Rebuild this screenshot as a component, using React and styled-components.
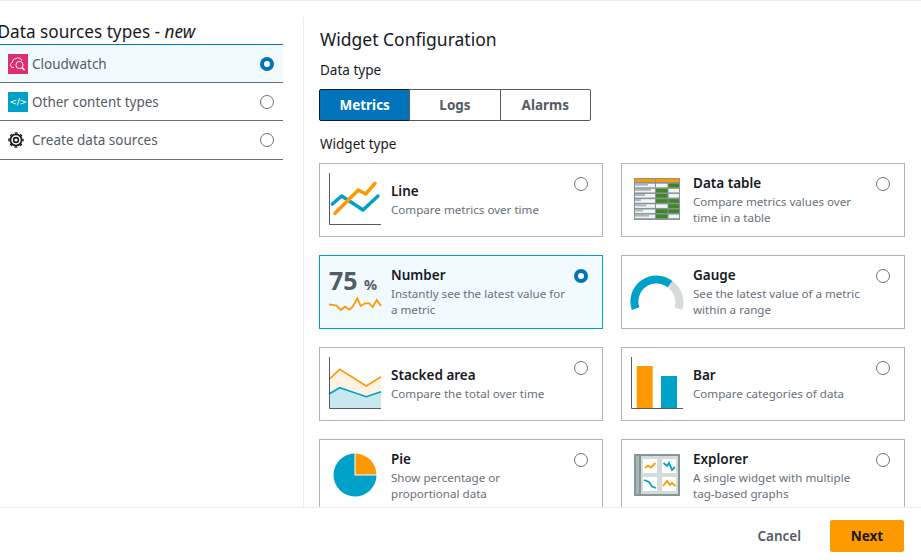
import styled, { createGlobalStyle } from 'styled-components';

const GlobalStyle = createGlobalStyle`
    html, body {
        margin: 0;
        padding: 0;
        background: #fff;
    }

    body {
        font-family: "Noto Sans", "Open Sans", sans-serif;
        color: #16191f;
    }
`;

const ORANGE = '#ff9900';
const BLUE = '#00a1c9';
const AXIS = '#545b64';

function LineIcon() {
    return (
        <Art viewBox="0 0 52 52">
            <path d="M0.5 -1V50.5H52" fill="none" stroke={AXIS} />
            <polyline points="3.3,30 12.7,22 34,36 49,22" fill="none" stroke={BLUE} strokeWidth="3.5" strokeLinecap="round" strokeLinejoin="round" />
            <polyline points="6,39.3 29.3,16 36.7,20 46,9.3" fill="none" stroke={ORANGE} strokeWidth="3.5" strokeLinecap="round" strokeLinejoin="round" />
        </Art>
    );
}

function NumberIcon() {
    return (
        <Art viewBox="0 0 52 52">
            <text x="0" y="24" fontSize="25" fontWeight="700" fill={AXIS}>75</text>
            <text x="35" y="24" fontSize="14.5" fontWeight="700" fill={AXIS}>%</text>
            <polyline points="0,38.3 7.7,39.7 11.7,44 16,40.7 20.3,43.7 23.7,40.7 28.3,32.3 31.7,40 36,37.3 40.3,37.3 43.7,41 47.7,34 52,40" fill="none" stroke={ORANGE} strokeWidth="1.8" />
        </Art>
    );
}

function StackedIcon() {
    return (
        <Art viewBox="0 0 52 52">
            <polygon points="0,21.3 10.7,11.3 37.3,28 52,18.7 52,33.7 37.3,38.7 10.7,29.7 0,36" fill="#fff3e4" />
            <polygon points="0,36 10.7,29.7 37.3,38.7 52,33.7 52,50 0,50" fill="#c8e8f0" />
            <polyline points="0,21.3 10.7,11.3 37.3,28 52,18.7" fill="none" stroke={ORANGE} strokeWidth="1.6" />
            <polyline points="0,36 10.7,29.7 37.3,38.7 52,33.7" fill="none" stroke={BLUE} strokeWidth="1.6" />
            <path d="M0.5 -1V50.5H52" fill="none" stroke={AXIS} />
        </Art>
    );
}

function PieIcon() {
    return (
        <Art viewBox="0 0 52 52">
            <path d="M25.5 3.5A21.5 21.5 0 1 0 47.5 25.5H25.5Z" fill={BLUE} />
            <path d="M26.5 3.5A21.5 21.5 0 0 1 47.5 24.5H26.5Z" fill={ORANGE} />
        </Art>
    );
}

const TABLE_ROWS = [
    [13, false, true],
    [16, true, false],
    [10, true, false],
    [6, true, true],
    [11, false, true],
    [8, true, true],
    [14, true, false],
];

function TableIcon() {
    return (
        <Art viewBox="0 0 52 52">
            <rect x="3" y="4" width="46" height="42" fill="#879596" />
            <rect x="4" y="5" width="20" height="3" fill={ORANGE} />
            <rect x="25" y="5" width="23" height="3" fill={ORANGE} />
            {TABLE_ROWS.map(([bar, second, third], i) => (
                <g key={i}>
                    <rect x="4" y={9.7 + i * 5.15} width="20" height="3.6" fill="#f2f3f3" />
                    <rect x="4" y={9.7 + i * 5.15} width={bar} height="2" fill="#aab7b8" />
                    <rect x="25" y={9.7 + i * 5.15} width="11.5" height="3.6" fill={second ? '#3f8624' : '#f2f3f3'} />
                    <rect x="37.5" y={9.7 + i * 5.15} width="10.5" height="3.6" fill={third ? '#3f8624' : '#f2f3f3'} />
                </g>
            ))}
        </Art>
    );
}

function GaugeIcon() {
    return (
        <Art viewBox="0 0 52 52">
            <path d="M39 18.2A22 22 0 0 1 47.4 42.6" fill="none" stroke="#d5dbdb" strokeWidth="8" />
            <path d="M4.6 42.6A22 22 0 0 1 39 18.2" fill="none" stroke={BLUE} strokeWidth="8" />
        </Art>
    );
}

function BarIcon() {
    return (
        <Art viewBox="0 0 52 52">
            <rect x="5.7" y="8" width="16" height="42" fill={ORANGE} />
            <rect x="30" y="18" width="16" height="32" fill={BLUE} />
            <path d="M0.5 -1V50.5H52" fill="none" stroke={AXIS} />
        </Art>
    );
}

function ExplorerIcon() {
    return (
        <Art viewBox="0 0 52 52">
            <rect x="4" y="5" width="44" height="40" fill="#d5dbdb" stroke="#879596" strokeWidth="2" />
            <rect x="4" y="5" width="5" height="40" fill="#aab7b8" stroke="#879596" strokeWidth="2" />
            <rect x="12" y="9" width="14" height="14" fill="#fff" />
            <rect x="31" y="9" width="14" height="14" fill="#fff" />
            <rect x="12" y="27" width="14" height="14" fill="#fff" />
            <rect x="31" y="27" width="14" height="14" fill="#fff" />
            <polyline points="14,18 17,15.5 20,17.5 24.5,13" fill="none" stroke={ORANGE} strokeWidth="1.8" />
            <polyline points="32.5,13 36,16 38,13 41,20 44,17" fill="none" stroke={BLUE} strokeWidth="1.8" />
            <polyline points="13,30 18,32 21,36.5 25,38" fill="none" stroke={BLUE} strokeWidth="1.8" />
            <polyline points="32,36 36,31 39,35 41,33 44.5,36" fill="none" stroke={ORANGE} strokeWidth="1.8" />
        </Art>
    );
}

function CloudwatchBadge() {
    return (
        <Badge $bg="#dd2e6e">
            <svg width="20" height="20" viewBox="0 0 20 20" fill="none" stroke="#fff" strokeWidth="0.9">
                <path d="M6 13.5H5A2.6 2.6 0 0 1 4.4 8.4 3.6 3.6 0 0 1 8 4.6 4 4 0 0 1 14 6.6" />
                <circle cx="11.5" cy="11" r="3.6" />
                <path d="M14.2 13.7L16.6 16.2" strokeWidth="1.6" />
            </svg>
        </Badge>
    );
}

function GearIcon() {
    return (
        <svg width="16" height="16" viewBox="0 0 16 16" fill="none" stroke="#16191f">
            <circle cx="8" cy="8" r="2.4" strokeWidth="1.6" />
            <circle cx="8" cy="8" r="5.6" strokeWidth="1.7" />
            <circle cx="8" cy="8" r="7" strokeWidth="1.4" strokeDasharray="2.9 2.6" strokeDashoffset="1.45" />
        </svg>
    );
}

const WIDGETS = [
    { name: 'Line', desc: 'Compare metrics over time', Icon: LineIcon },
    { name: 'Data table', desc: 'Compare metrics values over time in a table', Icon: TableIcon },
    { name: 'Number', desc: 'Instantly see the latest value for a metric', Icon: NumberIcon, selected: true },
    { name: 'Gauge', desc: 'See the latest value of a metric within a range', Icon: GaugeIcon },
    { name: 'Stacked area', desc: 'Compare the total over time', Icon: StackedIcon },
    { name: 'Bar', desc: 'Compare categories of data', Icon: BarIcon },
    { name: 'Pie', desc: 'Show percentage or proportional data', Icon: PieIcon },
    { name: 'Explorer', desc: 'A single widget with multiple tag-based graphs', Icon: ExplorerIcon },
];

export default function App() {
    return (
        <Page>
            <GlobalStyle />
            <Main>
                <Sidebar>
                    <SideTitle>Data sources types - <em>new</em></SideTitle>
                    <SourceList>
                        <SourceRow $selected>
                            <CloudwatchBadge />
                            <SourceName>Cloudwatch</SourceName>
                            <Radio $checked />
                        </SourceRow>
                        <SourceRow>
                            <Badge $bg="#00a1c9"><CodeMark>&lt;/&gt;</CodeMark></Badge>
                            <SourceName>Other content types</SourceName>
                            <Radio />
                        </SourceRow>
                        <SourceRow>
                            <GearSlot><GearIcon /></GearSlot>
                            <SourceName>Create data sources</SourceName>
                            <Radio />
                        </SourceRow>
                    </SourceList>
                </Sidebar>

                <Config>
                    <Heading>Widget Configuration</Heading>
                    <FieldLabel>Data type</FieldLabel>
                    <Segments>
                        <Segment $active>Metrics</Segment>
                        <Segment>Logs</Segment>
                        <Segment>Alarms</Segment>
                    </Segments>
                    <FieldLabel $top={14}>Widget type</FieldLabel>
                    <CardGrid>
                        {WIDGETS.map(({ name, desc, Icon, selected }) => (
                            <Card key={name} $selected={selected}>
                                <IconBox><Icon /></IconBox>
                                <CardText>
                                    <CardName>{name}</CardName>
                                    <CardDesc>{desc}</CardDesc>
                                </CardText>
                                <CardRadio $checked={selected} />
                            </Card>
                        ))}
                    </CardGrid>
                </Config>
            </Main>

            <Footer>
                <CancelButton>Cancel</CancelButton>
                <NextButton>Next</NextButton>
            </Footer>
        </Page>
    );
}


const Page = styled.div`
    width: 921px;
    height: 560px;
    display: flex;
    flex-direction: column;
    overflow: hidden;
    border-top: 1px solid #e9ebed;
    box-sizing: border-box;
`;

const Main = styled.main`
    flex: 1;
    min-height: 0;
    display: flex;
    overflow: hidden;
    padding-top: 16px;
`;

const Sidebar = styled.aside`
    flex: none;
    width: 328px;
    margin-left: -24px;
    padding-right: 20px;
    box-sizing: border-box;
    border-right: 1px solid #e9ebed;
`;

const SideTitle = styled.h2`
    margin: 0;
    height: 27px;
    padding-left: 21.5px;
    font-size: 17.2px;
    line-height: 30px;
    font-weight: 400;
    white-space: nowrap;
    color: #16191f;

    em {
        font-style: italic;
    }
`;

const SourceList = styled.div`
    display: flex;
    flex-direction: column;
`;

const SourceRow = styled.div`
    height: ${(p) => (p.$selected ? 39 : 38)}px;
    box-sizing: border-box;
    display: flex;
    align-items: center;
    padding: 0 8px 0 32px;
    border-bottom: 1px solid #687078;
    border-top: ${(p) => (p.$selected ? '1px solid #0073bb' : '0')};
    background: ${(p) => (p.$selected ? '#f1faff' : 'transparent')};

    &:last-child {
        height: 39px;
    }
`;

const Badge = styled.span`
    flex: none;
    width: 20px;
    height: 20px;
    display: flex;
    align-items: center;
    justify-content: center;
    background: ${(p) => p.$bg};
`;

const CodeMark = styled.span`
    font-family: "DejaVu Sans", sans-serif;
    font-size: 9px;
    color: #fff;
    letter-spacing: -0.4px;
`;

const GearSlot = styled.span`
    flex: none;
    width: 20px;
    height: 20px;
    display: flex;
    align-items: center;
`;

const SourceName = styled.span`
    flex: 1;
    margin-left: 4px;
    font-size: 13.5px;
    color: #545b64;
`;

const Radio = styled.span`
    flex: none;
    width: 14px;
    height: 14px;
    margin-right: 1px;
    border-radius: 50%;
    box-sizing: border-box;
    background: #fff;
    border: ${(p) => (p.$checked ? '4px solid #0073bb' : '1px solid #687078')};
`;

const Config = styled.section`
    flex: 1;
    min-width: 0;
    padding-left: 16px;
`;

const Heading = styled.h1`
    margin: 0;
    padding-top: 10px;
    padding-bottom: 1px;
    font-size: 17.5px;
    line-height: 24px;
    font-weight: 400;
    color: #16191f;
`;

const FieldLabel = styled.div`
    margin-top: ${(p) => p.$top || 9}px;
    font-size: 13.5px;
    line-height: 18px;
    color: #16191f;
`;

const Segments = styled.div`
    margin-top: 10px;
    display: flex;
    width: 272px;
    height: 32px;
    margin-left: -1px;
`;

const Segment = styled.div`
    flex: 1;
    display: flex;
    align-items: center;
    justify-content: center;
    box-sizing: border-box;
    font-size: 13.5px;
    font-weight: 700;
    margin-left: -1px;
    color: ${(p) => (p.$active ? '#fff' : '#545b64')};
    background: ${(p) => (p.$active ? '#0073bb' : '#fff')};
    border: 1px solid ${(p) => (p.$active ? '#16191f' : '#545b64')};

    &:first-child {
        margin-left: 0;
        border-radius: 2px 0 0 2px;
    }

    &:last-child {
        border-radius: 0 2px 2px 0;
    }
`;

const CardGrid = styled.div`
    margin-top: 10px;
    display: grid;
    grid-template-columns: 284px 284px;
    grid-auto-rows: 74px;
    column-gap: 18px;
    row-gap: 18px;
    margin-left: -1px;
`;

const Card = styled.div`
    box-sizing: border-box;
    display: flex;
    align-items: center;
    padding: 0 14px 0 9px;
    border: 1px solid ${(p) => (p.$selected ? '#00a1c9' : '#aab7b8')};
    background: ${(p) => (p.$selected ? '#f1faff' : '#fff')};
`;

const IconBox = styled.div`
    flex: none;
    width: 52px;
    height: 52px;
`;

const Art = styled.svg`
    display: block;
    width: 52px;
    height: 52px;
    overflow: visible;
    font-family: "Noto Sans", sans-serif;
`;

const CardText = styled.div`
    flex: 1;
    min-width: 0;
    margin-left: 10px;
    padding-right: 6px;
`;

const CardName = styled.div`
    margin: -1px 0 1px;
    font-size: 13.5px;
    line-height: 19px;
    font-weight: 600;
    color: #16191f;
`;

const CardDesc = styled.div`
    font-size: 11.6px;
    line-height: 16px;
    color: #687078;
`;

const CardRadio = styled(Radio)`
    align-self: flex-start;
    margin: 13px 0 0;
`;

const Footer = styled.footer`
    flex: none;
    height: 53px;
    box-sizing: border-box;
    display: flex;
    align-items: center;
    justify-content: flex-end;
    gap: 29px;
    padding: 4px 17px 0 0;
    background: #fff;
    border-top: 1px solid #e9ebed;
`;

const CancelButton = styled.span`
    font-size: 13.5px;
    font-weight: 600;
    color: #545b64;
`;

const NextButton = styled.button`
    width: 74px;
    height: 32px;
    border: 0;
    border-radius: 2px;
    background: #ff9900;
    color: #16191f;
    font-family: inherit;
    font-size: 13.5px;
    font-weight: 700;
`;
